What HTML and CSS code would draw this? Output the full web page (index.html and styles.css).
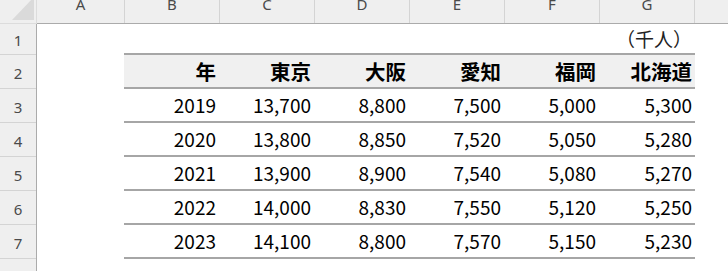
FILE: index.html
```html
<!DOCTYPE html>
<html lang="ja">
<head>
<meta charset="utf-8">
<title>Sheet</title>
<link rel="stylesheet" href="styles.css">
</head>
<body>
<div class="sheet">
  <div class="corner"><span class="tri"></span></div>
  <div class="colhdr">
    <div class="ch ch-a">A</div>
    <div class="ch">B</div>
    <div class="ch">C</div>
    <div class="ch">D</div>
    <div class="ch">E</div>
    <div class="ch">F</div>
    <div class="ch">G</div>
    <div class="ch ch-rest"></div>
  </div>
  <div class="rowhdr">
    <div class="rh rh-1">1</div>
    <div class="rh">2</div>
    <div class="rh">3</div>
    <div class="rh">4</div>
    <div class="rh">5</div>
    <div class="rh">6</div>
    <div class="rh">7</div>
    <div class="rh">8</div>
  </div>
  <div class="body">
    <div class="unit-row"><span class="unit">（千人）</span></div>
    <div class="tbl">
      <div class="tr th"><div class="c">年</div><div class="c">東京</div><div class="c">大阪</div><div class="c">愛知</div><div class="c">福岡</div><div class="c">北海道</div></div>
      <div class="tr"><div class="c">2019</div><div class="c">13,700</div><div class="c">8,800</div><div class="c">7,500</div><div class="c">5,000</div><div class="c">5,300</div></div>
      <div class="tr"><div class="c">2020</div><div class="c">13,800</div><div class="c">8,850</div><div class="c">7,520</div><div class="c">5,050</div><div class="c">5,280</div></div>
      <div class="tr"><div class="c">2021</div><div class="c">13,900</div><div class="c">8,900</div><div class="c">7,540</div><div class="c">5,080</div><div class="c">5,270</div></div>
      <div class="tr"><div class="c">2022</div><div class="c">14,000</div><div class="c">8,830</div><div class="c">7,550</div><div class="c">5,120</div><div class="c">5,250</div></div>
      <div class="tr"><div class="c">2023</div><div class="c">14,100</div><div class="c">8,800</div><div class="c">7,570</div><div class="c">5,150</div><div class="c">5,230</div></div>
    </div>
  </div>
</div>
</body>
</html>
```
FILE: styles.css
```css
html, body {
  margin: 0;
  background: #ffffff;
}

.sheet {
  display: grid;
  grid-template-columns: 37px 1fr;
  grid-template-rows: 24px 1fr;
  width: 728px;
  height: 271px;
  overflow: hidden;
  font-family: "Noto Sans CJK JP", "Noto Sans", sans-serif;
  color: #000000;
}

.corner {
  display: flex;
  justify-content: flex-end;
  align-items: flex-end;
  padding: 0 2px 3px 0;
  background: #efefef;
  border-right: 1px solid #dcdcdc;
  border-bottom: 1px solid #dcdcdc;
  overflow: hidden;
}

.tri {
  display: block;
  flex-shrink: 0;
  width: 22px;
  height: 23px;
  background: #dadada;
  clip-path: polygon(100% 0, 100% 100%, 0 100%);
}

.colhdr {
  display: flex;
  background: #efefef;
  border-bottom: 1px solid #ababab;
  overflow: hidden;
}

.ch {
  box-sizing: border-box;
  flex-shrink: 0;
  width: 95px;
  border-right: 1px solid #d4d4d4;
  text-align: center;
  font-family: "Noto Sans", sans-serif;
  font-size: 15px;
  line-height: 8px;
  color: #4a4a4a;
}

.ch-a {
  width: 88px;
}

.ch-rest {
  flex: 1;
  border-right: none;
}

.rowhdr {
  display: flex;
  flex-direction: column;
  background: #efefef;
  border-right: 1px solid #ababab;
}

.rh {
  box-sizing: border-box;
  flex-shrink: 0;
  height: 34px;
  padding-top: 3px;
  border-bottom: 1px solid #d4d4d4;
  display: flex;
  align-items: center;
  justify-content: center;
  font-family: "Noto Sans", sans-serif;
  font-size: 15px;
  color: #4a4a4a;
}

.rh-1 {
  height: 31px;
  padding-top: 2px;
}

.body {
  padding-left: 87px;
}

.unit-row {
  box-sizing: border-box;
  width: 571px;
  height: 29px;
  display: flex;
  justify-content: flex-end;
  align-items: center;
  padding-right: 3px;
}

.unit {
  font-size: 19px;
  color: #222222;
}

.tbl {
  width: 571px;
  border-top: 2px solid #a6a6a6;
}

.tr {
  box-sizing: border-box;
  display: grid;
  grid-template-columns: repeat(5, 95px) 96px;
  height: 34px;
  border-bottom: 2px solid #a6a6a6;
}

.th {
  background: #f0f0f0;
  font-weight: 700;
}

.c {
  text-align: right;
  padding-right: 3px;
  font-size: 19px;
  line-height: 32px;
}

.th .c {
  font-size: 20.5px;
}
```
